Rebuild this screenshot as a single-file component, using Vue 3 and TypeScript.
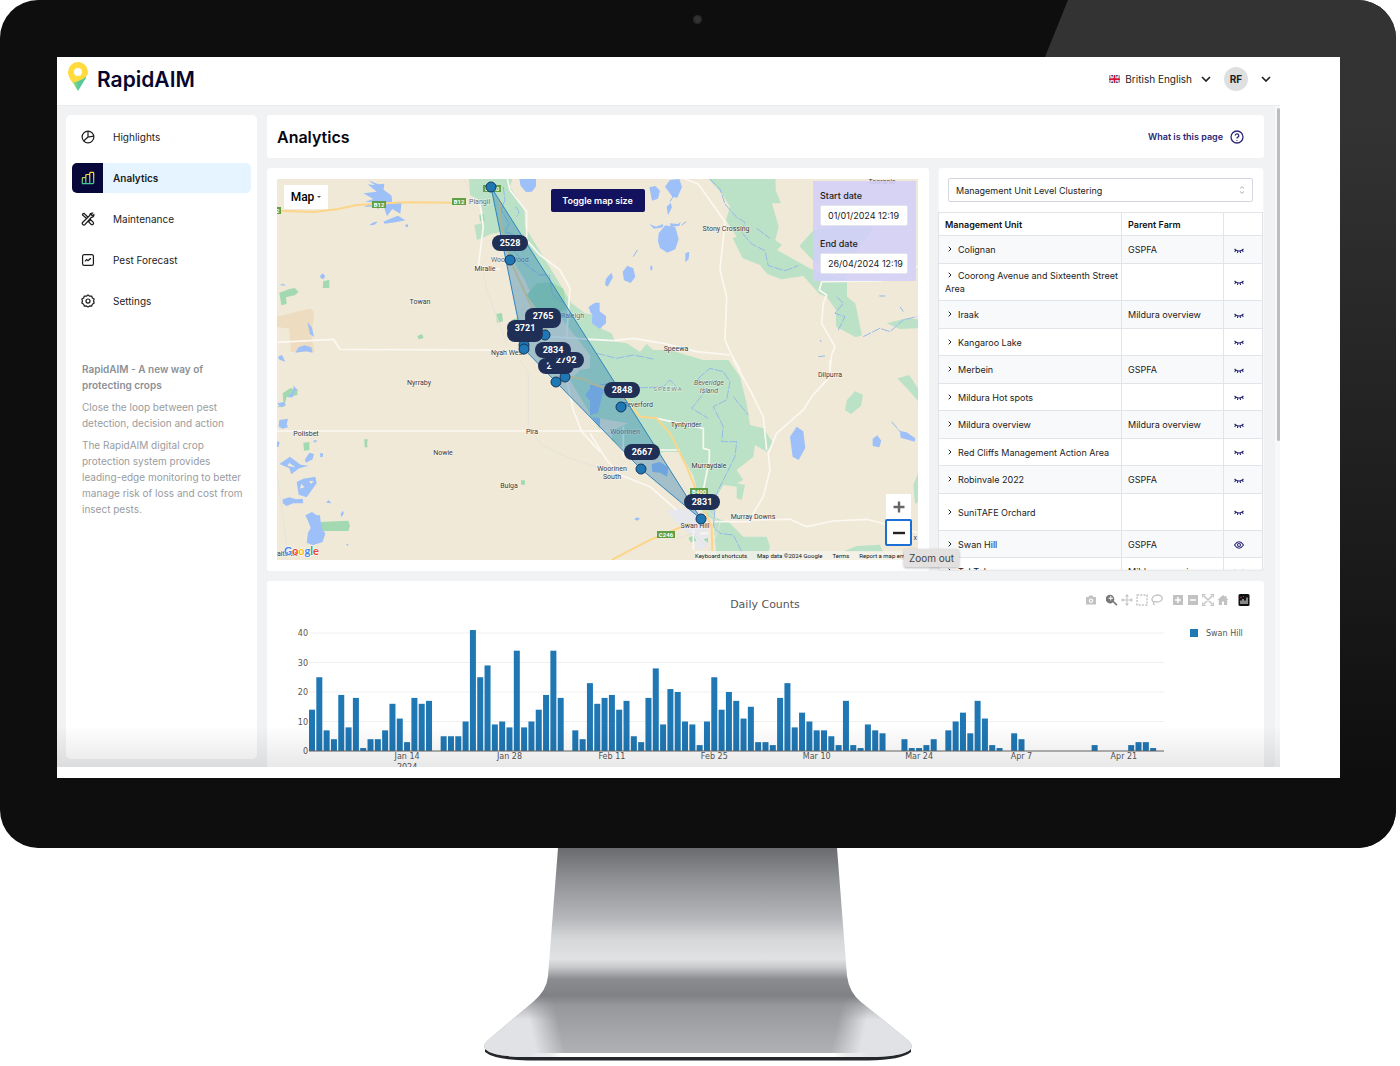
<script setup lang="ts">
import { ref } from 'vue'

interface UnitRow {
  name: string
  farm: string
  visible?: boolean
  tall?: boolean
}

interface MapLabel {
  x: number
  y: number
  text: string
  anchor?: 'start' | 'middle' | 'end'
  muted?: boolean
}

const startDate = ref('01/01/2024 12:19')
const endDate = ref('26/04/2024 12:19')
const clustering = ref('Management Unit Level Clustering')

const units: UnitRow[] = [
  { name: 'Colignan', farm: 'GSPFA' },
  { name: 'Coorong Avenue and Sixteenth Street Area', farm: '' },
  { name: 'Iraak', farm: 'Mildura overview' },
  { name: 'Kangaroo Lake', farm: '' },
  { name: 'Merbein', farm: 'GSPFA' },
  { name: 'Mildura Hot spots', farm: '' },
  { name: 'Mildura overview', farm: 'Mildura overview' },
  { name: 'Red Cliffs Management Action Area', farm: '' },
  { name: 'Robinvale 2022', farm: 'GSPFA' },
  { name: 'SuniTAFE Orchard', farm: '', tall: true },
  { name: 'Swan Hill', farm: 'GSPFA', visible: true },
  { name: 'Tol Tol', farm: 'Mildura overview' },
]

const labels: MapLabel[] = [
  { x: 143, y: 125, text: 'Towan' },
  { x: 449, y: 52, text: 'Stony Crossing' },
  { x: 208, y: 92, text: 'Miralie' },
  { x: 192, y: 25, text: 'Piangil', anchor: 'start', muted: true },
  { x: 214, y: 83, text: 'Wood Wood', anchor: 'start', muted: true },
  { x: 307, y: 139, text: 'Raleigh', anchor: 'end', muted: true },
  { x: 214, y: 176, text: 'Nyah West', anchor: 'start' },
  { x: 399, y: 172, text: 'Speewa' },
  { x: 553, y: 198, text: 'Dilpurra' },
  { x: 142, y: 206, text: 'Nyrraby' },
  { x: 29, y: 257, text: 'Polisbet' },
  { x: 255, y: 255, text: 'Pira' },
  { x: 166, y: 276, text: 'Nowie' },
  { x: 232, y: 309, text: 'Bulga' },
  { x: 376, y: 228, text: 'Beverford', anchor: 'end' },
  { x: 348, y: 255, text: 'Woorinen', muted: true },
  { x: 335, y: 292, text: 'Woorinen' },
  { x: 335, y: 300, text: 'South' },
  { x: 409, y: 248, text: 'Tyntynder' },
  { x: 432, y: 289, text: 'Murraydale' },
  { x: 476, y: 340, text: 'Murray Downs' },
  { x: 418, y: 349, text: 'Swan Hill' },
  { x: 605, y: 5, text: 'Tooranie' },
  { x: 0, y: 377, text: 'aitchie', anchor: 'start' },
  { x: 640, y: 361, text: 'x', anchor: 'end' },
]

const shields = [
  { x: -3, y: 32, text: 'B12' },
  { x: 102, y: 26, text: 'B12' },
  { x: 182, y: 23, text: 'B12' },
  { x: 213, y: 10, text: 'B400' },
  { x: 420, y: 313, text: 'B400' },
  { x: 387, y: 356, text: 'C246' },
]

const dots: [number, number][] = [
  [214, 8], [233, 81], [268, 156], [247, 166], [247, 170],
  [279, 203], [288, 198], [344, 228], [364, 290], [424, 340],
]

const badges = [
  { x: 279, y: 187, text: '2' },
  { x: 289, y: 181, text: '2792' },
  { x: 276, y: 171, text: '2834' },
  { x: 248, y: 155, text: '' },
  { x: 266, y: 141, text: '' },
  { x: 266, y: 137, text: '2765' },
  { x: 248, y: 149, text: '3721' },
  { x: 233, y: 64, text: '2528' },
  { x: 345, y: 211, text: '2848' },
  { x: 365, y: 273, text: '2667' },
  { x: 425, y: 323, text: '2831' },
]

const counts: number[] = [
  14, 25, 7, 4, 19, 8, 18, 1, 4, 4, 7, 16, 11, 3, 18, 16, 17, 0, 5, 5, 5, 10, 41, 25, 29, 9, 10, 8, 34, 8,
  10, 14, 19, 34, 18, 0, 7, 4, 23, 16, 18, 19, 14, 17, 5, 3, 18, 28, 9, 21, 20, 10, 9, 2, 10, 25, 14, 20, 17,
  11, 15, 3, 3, 2, 18, 23, 8, 13, 10, 7, 7, 5, 2, 17, 2, 1, 9, 7, 6, 0, 0, 4, 1, 1, 2, 4, 0, 7, 10, 13, 6, 17,
  11, 2, 1, 0, 6, 4, 0, 0, 0, 0, 0, 0, 0, 0, 0, 2, 0, 0, 0, 0, 2, 3, 3, 1,
]

const DAY = 512 / 70
const UNIT = 118 / 40
const BASE = 170
const FIRST = 45

const dayX = (day: number): number => FIRST + day * DAY
const countY = (value: number): number => BASE - value * UNIT

const yTicks = [0, 10, 20, 30, 40]
const xTicks = ['Jan 14', 'Jan 28', 'Feb 11', 'Feb 25', 'Mar 10', 'Mar 24', 'Apr 7', 'Apr 21'].map(
  (text, i) => ({ text, x: dayX(13 + i * 14) }),
)
</script>

<template>
  <div class="page">
    <div class="monitor">
      <div class="glare"></div>
      <span class="camera"></span>
      <div class="screen">
        <div class="app">
          <header class="topbar">
            <a class="brand" href="#">
              <svg width="22" height="30" viewBox="0 0 22 30" aria-hidden="true">
                <defs>
                  <linearGradient id="pinTip" x1="4" y1="0" x2="18" y2="0" gradientUnits="userSpaceOnUse">
                    <stop offset="0" stop-color="#b9e46a" /><stop offset=".5" stop-color="#5ccb97" /><stop offset="1" stop-color="#4fc79c" />
                  </linearGradient>
                </defs>
                <path d="M2.500 15l8.500 14 8.500-14z" fill="url(#pinTip)" />
                <path d="M11 0a10 10 0 0 0-10 10c0 3 1.200 5.500 3 8.500l1.500 2.300C12 19 18 17 20.500 12.500q.5-1.200.5-2.500A10 10 0 0 0 11 0z" fill="#ffdb3d" />
                <circle cx="11" cy="10" r="4" fill="#fff" />
              </svg>
              <span>RapidAIM</span>
            </a>
            <nav class="account" aria-label="Account">
              <button class="lang" type="button">
                <svg width="11" height="8" viewBox="0 0 22 16" aria-hidden="true">
                  <rect width="22" height="16" rx="2" fill="#3b4a92" />
                  <path d="M0 0l22 16M22 0L0 16" stroke="#fff" stroke-width="3" />
                  <path d="M0 0l22 16M22 0L0 16" stroke="#d8324a" stroke-width="1" />
                  <path d="M11 0v16M0 8h22" stroke="#fff" stroke-width="6" />
                  <path d="M11 0v16M0 8h22" stroke="#d3152f" stroke-width="3.500" />
                </svg>
                <span>British English</span>
                <svg width="10" height="6" viewBox="0 0 10 6" aria-hidden="true"><path class="chev" d="M1 1l4 4 4-4" /></svg>
              </button>
              <button class="user" type="button" aria-label="User menu">
                <span class="avatar">RF</span>
                <svg width="10" height="6" viewBox="0 0 10 6" aria-hidden="true"><path class="chev" d="M1 1l4 4 4-4" /></svg>
              </button>
            </nav>
          </header>

          <div class="body">
            <aside class="sidebar">
              <nav class="menu" aria-label="Main">
                <a href="#">
                  <i><svg viewBox="0 0 16 16"><circle cx="8" cy="8" r="6.700" /><path d="M8 1.500V8l6.500-1M8 8l-5 4.500" /></svg></i>
                  Highlights
                </a>
                <a href="#" class="active">
                  <i>
                    <svg viewBox="0 0 16 16">
                      <defs>
                        <linearGradient id="barsTint" x1="0" y1="0" x2="0" y2="1" gradientUnits="objectBoundingBox">
                          <stop offset=".2" stop-color="#ffd83d" /><stop offset="1" stop-color="#3fc592" />
                        </linearGradient>
                      </defs>
                      <path stroke="url(#barsTint)" d="M1.500 14.500V8.500q0-1 1-1h3v7zM5.500 14.500V5q0-1 1-1h3.500v10.500zM10 14.500V3q0-1.500 1-1.500h2.500q1 0 1 1v11q0 1-1 1z" />
                    </svg>
                  </i>
                  Analytics
                </a>
                <a href="#">
                  <i><svg viewBox="0 0 16 16"><path d="M2 14.300q-1.200-1.200 0-2.600L10 4q0-2.800 3-2.800L11.700 3l1.200 1.200L14.700 3q.2 3-2.900 3.200L4.600 14.300q-1.300 1.200-2.600 0zM6.500 7.500L1.700 3.300q0-1.800 1.800-1.800L8 6M9.500 10.200l1.500-1.400 3 3q.8 1.200-.2 2.200-1.200 1-2.300 0l-3-3z" /></svg></i>
                  Maintenance
                </a>
                <a href="#">
                  <i><svg viewBox="0 0 16 16"><rect x="1.800" y="1.800" width="12.400" height="12.400" rx="2" /><path d="M4.500 9.500l2-2 1.500 1.300L10.500 6.500h1" /></svg></i>
                  Pest Forecast
                </a>
                <a href="#">
                  <i><svg viewBox="0 0 16 16"><path d="M8 1l1.800 1.500 2.400-.2.800 2.200 2 1.300L14.400 8l.6 2.300-2 1.300-.8 2.200-2.400-.2L8 15l-1.800-1.400-2.400.2-.8-2.200-2-1.300L1.600 8 1 5.800l2-1.300.8-2.200 2.400.2z" stroke-linejoin="round" /><circle cx="8" cy="8" r="2.300" /></svg></i>
                  Settings
                </a>
              </nav>
              <div class="about">
                <h2>RapidAIM - A new way of protecting crops</h2>
                <p>Close the loop between pest detection, decision and action</p>
                <p>The RapidAIM digital crop protection system provides leading-edge monitoring to better manage risk of loss and cost from insect pests.</p>
              </div>
            </aside>

            <main class="main">
              <section class="card title-card">
                <h1>Analytics</h1>
                <a href="#" class="help">
                  What is this page
                  <svg width="14" height="14" viewBox="0 0 14 14" aria-hidden="true">
                    <circle cx="7" cy="7" r="6" /><path d="M5.200 5.500a1.800 1.800 0 1 1 2.600 1.700Q7 7.600 7 8.400M7 9.900v.8" />
                  </svg>
                </a>
              </section>

              <div class="row">
                <section class="card map-card">
                  <div class="map">
                    <svg class="map-art" viewBox="0 0 641 381" preserveAspectRatio="xMidYMid slice" role="img" aria-label="Map of Swan Hill region">
                      <rect width="641" height="381" fill="#f1e9d7" />
                      <!-- north-west tile -->
                      <g transform="translate(-7 -9) scale(.3333)">
                        <path class="tan" d="M21 440L80 425 120 416q15 5 12 20l-8 60 10 50H62l-4-70-37-5z" />
                        <path class="park" d="M597 27l3 48 28 15 12 40-12 5 7 25-22 5 8 46 40-18 34-8 10 50 60 95 30 70 60 20 140 180V440l-50-10-40-30-140-230-1-50-44-70 7-23z" />
                        <path class="wood" d="M28 368l28-10 18-4 12 12-12 10-26 6 2 20-16 4zM160 333l18-3v24h-20zM678 432l18-3 3 25-18 4zM442 498l14-6 5 12-15 4zM628 135l12-5 5 22-15 2zM728 448l15-4v16h-13z" />
                        <path class="wood" d="M800 340l45-4 35 20 10 60-70 30-50-70z" />
                        <path class="water" d="M280 70l40-5-27-22 22 3-20-15 30 12 18-2-2 18 24 18 2 24 28-4-4 34-24-14-16 22-10-30-18-4 3 14-12-10-32 2 26-14-22-2 24-8zM340 155l24-10 20-8 22 14-30 6-32 4zM298 166l12-9 14-2-12 10zM405 166l8-4 2 8-6 2zM748 27h50v22l-12 16-18 1-16-18zM150 318l8-8 8 8-6 10-8-4zM112 455l14 18 6 28-12-8zM76 548l10-16 18-6 20 6 4 16-20-4zM24 560l12-5 10 20-18-6zM28 345l12-4 8 6zM955 412l20-14 14 0v75l-24-14 4-20z" />
                        <path class="road" d="M712 27l8 33 50 65v85l40 45 60 45 30 55-10 145M628 90l12 80-15 120 65 7M21 517l169-9 20 30 440 2 70 8M840 500l150 10" />
                        <path class="lane" d="M580 27l18 25M640 300l10 60 30 80 30 80" />
                        <path class="stream" d="M700 50l5 40-12 30 25 40-14 25 30 10-6 40 30 40 50 40 30 0 10 60 40 30M735 110q20 15 5 30" />
                        <path class="highway" d="M21 122l110 4 70-8 60-13 140-8 160 1M690 90v60l30 120 60 130 50 80" />
                      </g>
                      <!-- north-east tile -->
                      <g transform="translate(313 -9) scale(.3333)">
                        <path class="park" d="M355 27l40 43 25 40-12 40 32 50-12 5 30 60 52 20 22 27 42 16 66-10 48 54 22 8 28 40v50l60 32 18-6-20-96-25-20v-50l-106-32-14-8-90-50 15-15-20-15 10-40-20-70h27l-16-40V27zM628 228l40-45 67-15 115 2-30 45-20 25-35 90-97-60zM0 430l20 40 45 20 10 25 35 5 40 25 20-23 20 18h50l100 30 50 5 25 35H0zM890 460l60-15 34 3v27l-54 2z" />
                        <path class="water" d="M225 50l15-20 28-3 8 24-14 32-14-2zM178 52l18-4 14 14-6 24-18 6zM206 190l20-24 30 6 10 36-10 30-24 10-22-14-6-20zM98 305l14-18 18 8 6 26-14 18-20-8zM48 326l16-18 5 14-16 28-8-6zM286 250l12-5-2 22-10 10zM180 290l6-4 2 12-6 4zM6 440l22-16 20 14v22l-20 16-22-16zM0 408l20-10 8 16-28 14zM230 110l12-12 4 14-12 24zM178 162l20 8 22-8-2 10-26 4zM240 160l24 2 8-6-4 12-26 2z" />
                        <path class="road" d="M285 27l40 15 80 113-15 145 20 80-5 130 20 45 25 45M0 508l70 4 60-7 90 15 100 25 100 10M720 600l5-45 10-25-40-70 5-60 10-25-22-15 7-25 175-2 114-44" />
                        <path class="stream" d="M360 27l30 30 15 45 35 40 25 15-10 30 30 35 40 20 10 45 50 15 40-15M500 175l40 30M20 550l60 15 50-10 60 12M820 500l50-25 30 10 40-35 40-10M740 380l20 20-25 30 30 10-20 40M240 95l15-25M275 165l14-10M130 260l12-20M868 378h18M690 510l4 6M685 560l20-2M930 410l10 15" />
                      </g>
                      <!-- south-west tile -->
                      <g transform="translate(-7 181) scale(.3333)">
                        <path class="park" d="M990 20l-60 10-30 30 90 150z" />
                        <path class="wood" d="M38 100l22-15 23 3-1 17-32 7-8 28-20 2 18-17zM100 248l18-2v24l-16 2zM283 238h11l-3 12 2 12h-9zM753 361h12v13h-12zM148 462l2 24 85-4 5 16-5 15h-80z" />
                        <path class="water" fill-rule="evenodd" d="M28 312l32-22 32 24 24 3-28 8-24 18-6-18zM58 308l-6 10 24 4zM104 300l14-22 14 4-4 16-20 10zM80 366l20-10 36-6 4 20-30 42-24-8zM94 372l-4 14 14-4zM118 362l4 10 10-8zM38 418l20-6 20 6 20-2 2 14-30 0-20 8-12-8zM106 466l20-10 14 10 10 0 2 20 6 24 8 10-8 26-30 10-18-8 4-30 8-14-8-22zM28 180l26-4-4 16 4 10-16 4-12-6zM22 130l20-4 6 10-16 6zM54 112l14-20 6 4-6 16zM70 76l12 14-10 4zM150 280l9 0v10l-8 2zM168 428l8-8 8 10zM212 462l6-10 4 8-8 12zM128 242l14-2-6 8zM228 552h8l-4 6zM163 448l5 5zM21 243l8 4-4 14h-4zM945 105l28-35 17 10v30l-30 12zM960 165l30-35v70z" />
                        <path class="road" d="M21 213h969M890 60l20 90 25 65 55 60" />
                        <path class="lane" d="M750 0l25 40v160l40 55 85 40 90 30M21 340l30 225" />
                        <path class="highway" d="M885 48l60 10 45 22" />
                      </g>
                      <!-- south-east tile -->
                      <g transform="translate(313 181) scale(.3333)">
                        <path class="park" d="M0 0h415l35 50 20 80 10 65 40 10 30 45-20 25-35-20-5 35-50 40 20 30-20 10 25 5-10 45-15-5v-35l-40-5-20 35-10 60 50 20 40 40h70l10 30-10 40H380l-10-120-30-20-30-70-40-60-60-40-70 0-75-50 5-30 45-20L0 170zM765 150l6-30 24-26 24 10-6 34-30 24zM922 55l36-10 26 40v38l-28-32zM984 340l-14 36 5 56 9-6zM765 572l35-14 70-4 10 22H770z" />
                        <path class="land" d="M190 300l30-25 50 2 40 70 10 40-50 15z" />
                        <path class="urban" d="M230 452l30-8 60 10 30 20 5 40-6 50-28 6-12-40-38-30z" />
                        <path class="wood" d="M295 535l16-10 8 18-16 4zM340 538l14-4v14z" />
                        <path class="water" d="M600 230l20-30 20 14 6 50-20 36-18-10zM848 236l14-10 12 16-6 20-20-4zM930 213l20 4 26 18-2 10-42-12zM132 478l10-6 8 4-8 6zM185 312l24-6 26 16-4 28-20-12-24-2zM0 70l42 18-8 30-10 40-24 8z" />
                        <path class="road" d="M430 0l50 90 40 80 10 100M720 0v50l-55 60-25 40-80 70-25 60 5 50-20 80-30 50-10 25H370M480 480l120-2 50 22 80-17 100-5 154 40M0 220l50 80 40 45 90 35 80 70M200 175l140 30v60l18 5v30l-18 90M0 213h80M100 200v90M190 270h80M310 510v60M330 520h25" />
                        <path class="lane" d="M280 380l110 110-30 90M250 540l60-20 50 50" />
                        <path class="stream" d="M0 80l60-10 60 15 100-5 20-20 20 20M325 55l35-30 40 10 20 30-10 55-40 20 30 60-5 45h45l-5 45-35 70-20 40-10 100 20 20 40 5 30 60 30 20M325 55l20 40-40 50 50 30M430 110l45 55M905 185l25 30" />
                        <path class="highway" d="M0 70l50 15 60 35 40 50 50 5 40 45 50 100 40 100 35 80 2 75M65 600l115-60 120-50" />
                      </g>

                      <g class="names">
                        <text v-for="l in labels" :key="l.text + l.y" :x="l.x" :y="l.y" :class="{ muted: l.muted }" :text-anchor="l.anchor ?? 'middle'">{{ l.text }}</text>
                        <text class="isle" x="432" y="206" text-anchor="middle">Beveridge</text>
                        <text class="isle" x="432" y="214" text-anchor="middle">Island</text>
                        <text class="parish" x="391" y="212" text-anchor="middle">SPEEWA</text>
                      </g>
                      <g v-for="(s, i) in shields" :key="i" class="shield">
                        <rect :x="s.x - 7" :y="s.y - 4" :width="s.text.length > 3 ? 18 : 14" height="7" />
                        <text :x="s.x + (s.text.length > 3 ? 2 : 0)" :y="s.y + 2" text-anchor="middle">{{ s.text }}</text>
                      </g>

                      <path class="hull" d="M214 8L424 340 364 290 279 203 247 170z" />
                      <circle v-for="(d, i) in dots" :key="i" class="dot" :cx="d[0]" :cy="d[1]" r="5" />
                      <g v-for="(b, i) in badges" :key="i" class="badge">
                        <rect :x="b.x - 18" :y="b.y - 8" width="36" height="16" rx="8" />
                        <text :x="b.text.length > 1 ? b.x : b.x - 7" :y="b.y + 3" text-anchor="middle">{{ b.text }}</text>
                      </g>
                      <text class="google" x="7" y="376"><tspan fill="#4285f4">G</tspan><tspan fill="#ea4335">o</tspan><tspan fill="#fbbc05">o</tspan><tspan fill="#4285f4">g</tspan><tspan fill="#34a853">l</tspan><tspan fill="#ea4335">e</tspan></text>
                    </svg>

                    <button class="map-type" type="button">Map <span class="caret"></span></button>
                    <button class="toggle" type="button">Toggle map size</button>
                    <form class="dates">
                      <label for="start">Start date</label>
                      <input id="start" v-model="startDate" type="text" />
                      <label for="end">End date</label>
                      <input id="end" v-model="endDate" type="text" />
                    </form>
                    <div class="zoom">
                      <button type="button" aria-label="Zoom in"><svg viewBox="0 0 12 12"><path d="M6 0.500v11M0.500 6h11" /></svg></button>
                      <button type="button" aria-label="Zoom out" class="focused"><svg viewBox="0 0 12 12"><path d="M0 6h12" /></svg></button>
                    </div>
                    <div class="credits">
                      <a href="#">Keyboard shortcuts</a><span>Map data ©2024 Google</span><a href="#">Terms</a><a href="#">Report a map error</a>
                    </div>
                    <span class="tip" role="tooltip">Zoom out</span>
                  </div>
                </section>

                <section class="card units-card">
                  <div class="picker">
                    <select v-model="clustering" aria-label="Clustering level">
                      <option>Management Unit Level Clustering</option>
                    </select>
                    <svg width="6" height="8" viewBox="0 0 6 8" aria-hidden="true"><path d="M1 2.500L3 .7l2 1.800M1 5.500l2 1.800 2-1.800" /></svg>
                  </div>
                  <div class="table-clip">
                    <table>
                      <colgroup><col class="c-name" /><col class="c-farm" /><col class="c-eye" /></colgroup>
                      <thead>
                        <tr><th scope="col">Management Unit</th><th scope="col">Parent Farm</th><th></th></tr>
                      </thead>
                      <tbody>
                        <tr v-for="u in units" :key="u.name" :class="{ tall: u.tall }">
                          <td class="name">
                            <svg class="arrow" width="4" height="6" viewBox="0 0 4 6" aria-hidden="true"><path d="M.7.700L3 3 .7 5.300" /></svg>{{ u.name }}
                          </td>
                          <td>{{ u.farm }}</td>
                          <td class="eye">
                            <svg v-if="u.visible" width="10" height="8" viewBox="0 0 20 16" role="img" aria-label="Shown"><path d="M1 8q9-13 18 0-9 13-18 0z" /><circle cx="10" cy="8" r="3" /></svg>
                            <svg v-else width="10" height="6" viewBox="0 0 20 12" role="img" aria-label="Hidden"><path d="M1 2q9 8 18 0M3.500 4L1.500 8M7.500 6L7 10M12.500 6l.5 4M16.500 4L18.500 8" /></svg>
                          </td>
                        </tr>
                      </tbody>
                    </table>
                  </div>
                </section>
              </div>

              <section class="card chart-card">
                <svg class="chart" viewBox="0 0 997 186" preserveAspectRatio="xMidYMin meet" role="img" aria-label="Daily counts for Swan Hill">
                  <text class="chart-title" x="498" y="27" text-anchor="middle">Daily Counts</text>
                  <g v-for="t in yTicks" :key="t">
                    <path v-if="t" class="grid" :d="`M42 ${countY(t)}H897`" />
                    <text class="tick" x="41" :y="countY(t) + 3" text-anchor="end">{{ t }}</text>
                  </g>
                  <rect v-for="(c, i) in counts" v-show="c > 0" :key="i" class="bar" :x="dayX(i) - 3" :y="countY(c)" width="6" :height="c * UNIT" />
                  <path class="axis" d="M42 170H897" />
                  <text v-for="t in xTicks" :key="t.text" class="tick" :x="t.x" y="178" text-anchor="middle">{{ t.text }}</text>
                  <text class="tick" :x="dayX(13)" y="189" text-anchor="middle">2024</text>
                  <rect x="923" y="48" width="8" height="8" fill="#1f77b4" />
                  <text class="tick" x="939" y="55">Swan Hill</text>
                </svg>
                <div class="modebar">
                  <button type="button" aria-label="Download plot"><svg viewBox="0 0 12 12"><path d="M1 3h2.500l1-1.500h3L8.500 3H11v7.500H1zM6 4.500a2.200 2.200 0 1 0 .01 0z" fill-rule="evenodd" /><circle cx="6" cy="6.700" r="1.100" /></svg></button>
                  <button type="button" aria-label="Zoom" class="gap on"><svg viewBox="0 0 12 12"><path d="M7.800 7l3.700 3.500-1.200 1.200L6.900 8.200a4.300 4.300 0 1 1 .9-1.200zM4.300 2v1.800H2.500v1h1.800v1.800h1V4.800h1.800v-1H5.300V2z" fill-rule="evenodd" /></svg></button>
                  <button type="button" aria-label="Pan"><svg viewBox="0 0 12 12"><path d="M6 0l2 2.500H6.500v3h3V4L12 6 9.500 8V6.500h-3v3H8L6 12 4 9.500h1.500v-3h-3V8L0 6l2.500-2v1.500h3v-3H4z" /></svg></button>
                  <button type="button" aria-label="Box select"><svg viewBox="0 0 12 12"><rect x="1" y="1" width="10" height="10" fill="none" stroke="#c2c2c2" stroke-width="1.400" stroke-dasharray="2 1.300" /></svg></button>
                  <button type="button" aria-label="Lasso select"><svg viewBox="0 0 12 12"><path d="M2.500 8Q-.5 5 2.500 2.500 7-.5 10.500 2.500 12.500 6 8.500 7.500 5.500 8.500 3.500 7.500q-2 1.500 0 3.500" fill="none" stroke="#c2c2c2" stroke-width="1.300" /></svg></button>
                  <button type="button" aria-label="Zoom in chart" class="gap"><svg viewBox="0 0 12 12"><path d="M1 1h10v10H1zM5.200 3v2.200H3v1.600h2.200V9h1.600V6.800H9V5.200H6.800V3z" fill-rule="evenodd" /></svg></button>
                  <button type="button" aria-label="Zoom out chart"><svg viewBox="0 0 12 12"><path d="M1 1h10v10H1zM3 5.200v1.600h6V5.200z" fill-rule="evenodd" /></svg></button>
                  <button type="button" aria-label="Autoscale"><svg viewBox="0 0 12 12"><path d="M.7 3.500V.7h2.800M8.500.700h2.800v2.800M11.300 8.500v2.800H8.500M3.500 11.300H.700V8.500M2 2l8 8M10 2l-8 8" fill="none" stroke="#c2c2c2" stroke-width="1.300" /></svg></button>
                  <button type="button" aria-label="Reset axes"><svg viewBox="0 0 12 12"><path d="M6 1l2 1.800V2h1.500v2.200L11.500 6h-1.300v5H7V7.500H5V11H1.800V6H.5z" /></svg></button>
                  <button type="button" aria-label="Produced with Plotly" class="gap"><svg viewBox="0 0 12 12"><rect x=".5" width="11" height="12" rx="1.500" fill="#111" /><path d="M3 6.500V10M5 5v5M7 6.500V10M9 3.500V10" stroke="#fff" stroke-width="1" /><circle cx="3" cy="3.500" r=".7" fill="#e23a5b" /><circle cx="5.500" cy="2.500" r=".6" fill="#e23a5b" /></svg></button>
                </div>
              </section>
            </main>
            <div class="scrollbar"><span></span></div>
          </div>
        </div>
      </div>
    </div>

    <svg class="stand" width="440" height="218" viewBox="0 0 440 218" aria-hidden="true">
      <defs>
        <linearGradient id="metal" x1="0" y1="0" x2="0" y2="205" gradientUnits="userSpaceOnUse">
          <stop offset="0" stop-color="#696b6f" /><stop offset=".15" stop-color="#8f9094" />
          <stop offset=".34" stop-color="#b5b6ba" /><stop offset=".44" stop-color="#d5d6d8" />
          <stop offset=".54" stop-color="#e1e2e4" /><stop offset=".58" stop-color="#c9cacc" />
          <stop offset=".64" stop-color="#8b8c90" /><stop offset=".72" stop-color="#7f8185" />
          <stop offset=".77" stop-color="#97989b" /><stop offset="1" stop-color="#b0b1b4" />
        </linearGradient>
        <linearGradient id="wingL" x1="54" y1="186" x2="82" y2="180" gradientUnits="userSpaceOnUse">
          <stop offset="0" stop-color="#e1e2e5" /><stop offset="1" stop-color="#e1e2e5" stop-opacity="0" />
        </linearGradient>
        <linearGradient id="wingR" x1="386" y1="186" x2="358" y2="180" gradientUnits="userSpaceOnUse">
          <stop offset="0" stop-color="#e1e2e5" /><stop offset="1" stop-color="#e1e2e5" stop-opacity="0" />
        </linearGradient>
        <linearGradient id="fadeDown" x1="0" y1="148" x2="0" y2="172" gradientUnits="userSpaceOnUse">
          <stop offset="0" stop-color="#000" /><stop offset="1" stop-color="#fff" />
        </linearGradient>
        <linearGradient id="lip" x1="50" y1="0" x2="390" y2="0" gradientUnits="userSpaceOnUse">
          <stop offset="0" stop-color="#fff" stop-opacity="0" /><stop offset=".1" stop-color="#fff" />
          <stop offset=".9" stop-color="#fff" /><stop offset="1" stop-color="#fff" stop-opacity="0" />
        </linearGradient>
        <mask id="wingMask"><rect width="440" height="218" fill="url(#fadeDown)" /></mask>
        <clipPath id="standShape">
          <path d="M80 0h279l10 128q2 16 14 26l48 39q4 4 2 8-8 8-43 8H50q-35 0-43-8-2-4 2-8l46-39q14-12 15-26z" />
        </clipPath>
      </defs>
      <path d="M7 198v6q10 8 43 8.500h340q33-.5 43-8.500v-6z" fill="#24262b" />
      <g clip-path="url(#standShape)">
        <rect width="440" height="218" fill="url(#metal)" />
        <g mask="url(#wingMask)">
          <rect width="110" height="218" fill="url(#wingL)" />
          <rect x="330" width="110" height="218" fill="url(#wingR)" />
        </g>
        <rect x="50" y="205" width="340" height="4" fill="url(#lip)" />
      </g>
    </svg>
  </div>
</template>

<style>
body {
  margin: 0;
  background: #fff;
}
</style>

<style scoped>
* {
  box-sizing: border-box;
}
.page {
  display: flex;
  flex-direction: column;
  align-items: center;
  overflow: hidden;
  padding-right: 4px;
  font-family: Inter, "Liberation Sans", sans-serif;
  font-size: 9px;
  color: #1c1c1c;
}
button {
  margin: 0;
  padding: 0;
  border: 0;
  background: none;
  font: inherit;
  color: inherit;
}
a {
  color: inherit;
  text-decoration: none;
}
h1, h2, p {
  margin: 0;
}
.monitor {
  position: relative;
  align-self: stretch;
  padding: 57px 56px 70px 57px;
  border-radius: 38px;
  background: #0e0e0e;
  overflow: hidden;
}
.glare {
  position: absolute;
  inset: 0 0 0 auto;
  width: 351px;
  clip-path: polygon(23px 0, 100% 0, 100% 100%, 200px 100%, 0 57px);
  background: linear-gradient(#333 120px, #0e0e0e 92%);
}
.camera {
  position: absolute;
  top: 15px;
  left: 50%;
  width: 9px;
  height: 9px;
  margin-left: -5px;
  border-radius: 50%;
  background: radial-gradient(#333 30%, #1c1c1c);
}
.screen {
  position: relative;
  padding: 0 60px 11px 0;
  background: #fff;
}
.app {
  position: relative;
  overflow: hidden;
}
.app::after {
  content: "";
  position: absolute;
  inset: auto 0 0;
  height: 42px;
  background: linear-gradient(transparent, rgba(0, 0, 0, .09));
  pointer-events: none;
}
.topbar {
  display: flex;
  align-items: center;
  justify-content: space-between;
  height: 48px;
  padding: 0 9px 4px 10px;
}
.brand {
  display: flex;
  align-items: center;
  gap: 8px;
  height: 42px;
  font-size: 21px;
  font-weight: 600;
  line-height: 24px;
  color: #06062e;
}
.brand svg {
  margin-bottom: 4px;
}
.brand span {
  padding-top: 2px;
}
.account, .lang, .user {
  display: flex;
  align-items: center;
}
.account {
  gap: 13px;
  font-size: 10px;
}
.lang {
  gap: 5px;
}
.lang svg:last-child {
  margin-left: 4px;
}
.user {
  gap: 13px;
}
.avatar {
  display: grid;
  place-items: center;
  width: 24px;
  height: 24px;
  border-radius: 50%;
  background: #dedfe0;
  font-weight: 700;
}
.chev {
  fill: none;
  stroke: #1c1c1c;
  stroke-width: 1.6;
}
.body {
  display: flex;
  padding: 9px 0 0 9px;
  gap: 10px;
  border-top: 1px solid #ececee;
  background: #f0f2f4;
}
.sidebar {
  flex: none;
  width: 191px;
  margin-bottom: 8px;
  padding: 7px 6px 0;
  border-radius: 5px;
  background: #fff;
}
.menu {
  display: flex;
  flex-direction: column;
  gap: 11px;
}
.menu a {
  display: flex;
  align-items: center;
  gap: 10px;
  height: 30px;
  border-radius: 5px;
  overflow: hidden;
  font-size: 10px;
}
.menu i {
  display: grid;
  place-items: center;
  width: 31px;
  height: 30px;
}
.menu svg {
  width: 14px;
  height: 14px;
  fill: none;
  stroke: #1c1c1c;
  stroke-width: 1.4;
}
.menu .active {
  background: #e6f4ff;
  font-weight: 600;
}
.menu .active i {
  background: #07073a;
}
.about {
  padding: 45px 6px 0 10px;
  color: #999ca0;
  font-size: 10px;
  line-height: 16px;
}
.about h2 {
  font-size: 10px;
  font-weight: 600;
  color: #8c9096;
}
.about p {
  margin-top: 6px;
}
.main {
  flex: 1;
  min-width: 0;
  display: flex;
  flex-direction: column;
  gap: 10px;
}
.card {
  border-radius: 3px;
  background: #fff;
}
.title-card {
  display: flex;
  align-items: center;
  justify-content: space-between;
  height: 43px;
  padding: 0 20px 0 10px;
}
h1 {
  font-size: 16px;
  font-weight: 600;
  color: #06060f;
}
.help {
  display: flex;
  align-items: center;
  gap: 7px;
  font-weight: 600;
  color: #2b2875;
}
.help svg {
  fill: none;
  stroke: #2b2875;
  stroke-width: 1.3;
}
.row {
  display: flex;
  gap: 9px;
  height: 403px;
}
.map-card {
  flex: 1;
  min-width: 0;
  padding: 11px 11px 11px 10px;
}
.map {
  position: relative;
  height: 381px;
}
.map-art {
  display: block;
  width: 100%;
  height: 100%;
  font-family: Roboto, sans-serif;
}
.park { fill: #bbe2c6; }
.wood { fill: #a2d9b1; }
.tan { fill: #eedcc1; }
.land { fill: #f1e9d7; }
.urban { fill: #e7e8ee; }
.water { fill: #9dc0f9; }
.road, .lane, .stream, .highway {
  fill: none;
  stroke-linejoin: round;
}
.road {
  stroke: #fbf8f2;
  stroke-width: 5;
}
.lane {
  stroke: #e6e2dc;
  stroke-width: 3;
}
.stream {
  stroke: #94b9ea;
  stroke-width: 3;
  stroke-dasharray: 26 4;
}
.highway {
  stroke: #fbd68a;
  stroke-width: 6;
}
.names text {
  font-size: 7px;
  fill: #35383d;
  stroke: #fff;
  stroke-opacity: .6;
  stroke-width: 1;
  paint-order: stroke;
}
.names .muted {
  fill: #63676b;
}
.names .isle {
  font-style: italic;
  fill: #53605a;
}
.names .parish {
  font-size: 6px;
  letter-spacing: 1px;
  fill: #6d7f76;
}
.shield rect {
  fill: #5f9f45;
}
.shield text {
  font-size: 6px;
  font-weight: 700;
  fill: #fff;
}
.hull {
  fill: #1f77b4;
  fill-opacity: .37;
  stroke: #2f85bb;
  stroke-width: 1;
}
.dot {
  fill: #1f77b4;
  stroke: #15365c;
  stroke-width: 1;
}
.badge rect {
  fill: #1f2f56;
}
.badge text {
  font-size: 9px;
  font-weight: 700;
  fill: #fff;
}
.google {
  font-family: Lato, sans-serif;
  font-size: 11px;
  font-weight: 700;
  stroke: #fff;
  stroke-width: 1;
  paint-order: stroke;
}
.map-type {
  position: absolute;
  top: 6px;
  left: 7px;
  display: flex;
  align-items: center;
  justify-content: center;
  gap: 3px;
  width: 44px;
  height: 24px;
  border-radius: 1px;
  background: #fff;
  font: 500 12px Roboto, sans-serif;
  color: #000;
}
.caret {
  border: 2px solid transparent;
  border-top-color: #555;
  border-bottom: 0;
}
.toggle {
  position: absolute;
  top: 10px;
  left: 50%;
  width: 94px;
  height: 23px;
  margin-left: -47px;
  border-radius: 2px;
  background: #12125f;
  font-weight: 600;
  color: #fff;
}
.dates {
  position: absolute;
  top: 2px;
  right: 2px;
  display: flex;
  flex-direction: column;
  width: 103px;
  padding: 8px 8px 7px 7px;
  background: rgba(209, 207, 249, .88);
}
.dates label {
  height: 16px;
  font-weight: 500;
  line-height: 14px;
}
.dates input {
  width: 88px;
  height: 21px;
  padding: 0 0 0 7px;
  border: 1px solid #e3e3ec;
  border-radius: 2px;
  background: #fff;
  font: inherit;
  color: #222;
}
.dates input + label {
  margin-top: 11px;
}
.zoom {
  position: absolute;
  right: 6px;
  bottom: 14px;
  width: 27px;
}
.zoom button {
  display: grid;
  place-items: center;
  width: 25px;
  height: 25px;
  margin: 0 1px;
  background: #fff;
}
.zoom .focused {
  width: 27px;
  height: 27px;
  margin: 0;
  border: 2px solid #1b6fd6;
  border-radius: 2px;
}
.zoom svg {
  width: 12px;
  height: 12px;
  stroke: #666;
  stroke-width: 2.4;
}
.zoom .focused svg {
  stroke: #222;
}
.credits {
  position: absolute;
  right: 0;
  bottom: 0;
  display: flex;
  gap: 10px;
  width: 223px;
  height: 9px;
  overflow: hidden;
  background: rgba(245, 242, 235, .8);
  font: 6px/9px Roboto, sans-serif;
  white-space: nowrap;
  color: #111;
}
.tip {
  position: absolute;
  right: -41px;
  bottom: -7px;
  z-index: 2;
  width: 55px;
  height: 18px;
  border-radius: 2px;
  background: #e2e1e0;
  box-shadow: 0 1px 3px rgba(0, 0, 0, .3);
  font-size: 10px;
  line-height: 18px;
  text-align: center;
  color: #444;
}
.units-card {
  flex: none;
  width: 326px;
  overflow: hidden;
  box-shadow: inset 0 -1px 2px rgba(0, 0, 0, .12);
}
.picker {
  position: relative;
  padding: 10px 11px 10px 10px;
}
.picker select {
  display: block;
  appearance: none;
  width: 100%;
  height: 24px;
  padding: 0 7px;
  border: 1px solid #d4d6df;
  border-radius: 2px;
  background: #fff;
  font: inherit;
  color: #222;
}
.picker svg {
  position: absolute;
  right: 19px;
  top: 18px;
  fill: none;
  stroke: #999;
  stroke-width: .8;
}
.table-clip {
  height: 358px;
  padding-right: 1px;
  overflow: hidden;
}
table {
  width: 100%;
  border-collapse: collapse;
  table-layout: fixed;
}
.c-farm { width: 102px; }
.c-eye { width: 39px; }
th, td {
  padding: 0 6px;
  border: 1px solid #e3e4e9;
  text-align: left;
  line-height: 13px;
}
th {
  height: 23px;
  font-weight: 600;
  color: #111;
}
td {
  height: 27px;
}
td.name {
  padding-right: 0;
}
tbody tr:nth-child(odd) td {
  height: 28px;
  background: #f8f9fb;
}
tbody tr:nth-child(2) td {
  height: 37px;
}
tbody tr:nth-child(11) td {
  height: 27px;
}
tbody .tall td {
  height: 37px;
}
.arrow {
  margin: 0 6px 1px 3px;
  fill: none;
  stroke: #222;
}
td.eye {
  padding: 0;
  padding-right: 8px;
  text-align: center;
}
.eye svg {
  display: inline-block;
  vertical-align: middle;
  fill: none;
  stroke: #2b2875;
  stroke-width: 2.2;
}
.chart-card {
  position: relative;
  border-radius: 3px 3px 0 0;
}
.chart {
  display: block;
  width: 100%;
  overflow: hidden;
  font-family: "DejaVu Sans", sans-serif;
}
.chart-title {
  font-size: 11px;
  fill: #555;
}
.tick {
  font-size: 8px;
  fill: #555;
}
.grid {
  stroke: #f0f0f1;
}
.axis {
  stroke: #666;
}
.bar {
  fill: #1f77b4;
}
.modebar {
  position: absolute;
  top: 13px;
  right: 14px;
  display: flex;
  gap: 3px;
}
.modebar button {
  width: 12px;
  height: 12px;
}
.modebar svg {
  display: block;
  width: 12px;
  height: 12px;
  fill: #c2c2c2;
}
.modebar .gap {
  margin-left: 6px;
}
.modebar .on svg {
  fill: #777;
}
.scrollbar {
  flex: none;
  align-self: stretch;
  width: 5px;
  margin: -9px 0 0 1px;
  padding: 2px 0 0 2px;
  background: #f8f8f9;
}
.scrollbar span {
  display: block;
  height: 333px;
  border-radius: 2px;
  background: #bcbdbf;
}
.stand {
  display: block;
}
</style>
